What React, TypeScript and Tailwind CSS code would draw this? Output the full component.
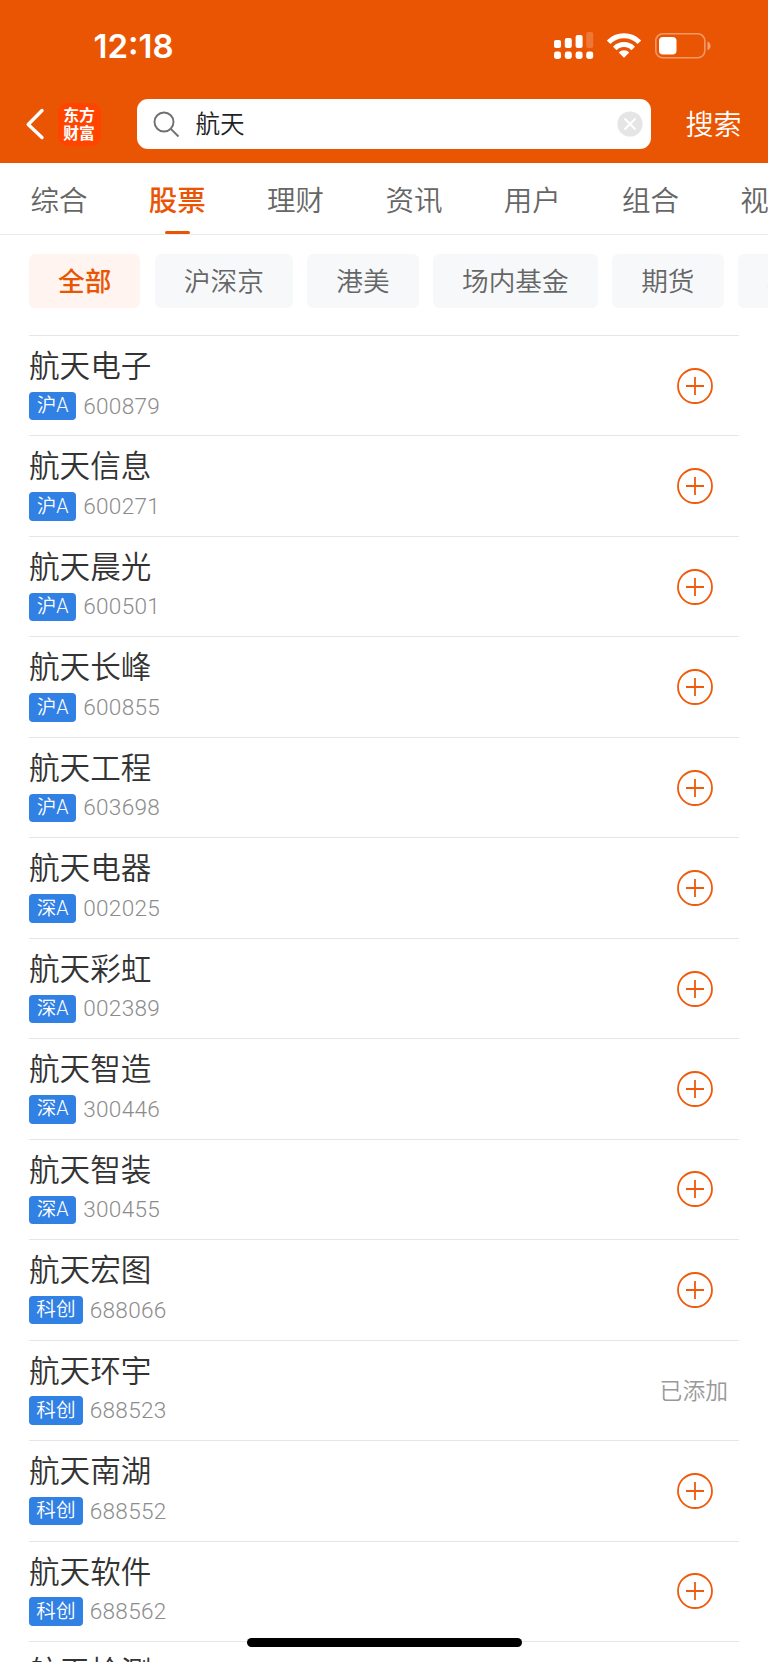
const TABS = ["综合", "股票", "理财", "资讯", "用户", "组合", "视频"];
const FILTERS = ["全部", "沪深京", "港美", "场内基金", "期货", "板块"];

type Stock = { name: string; market: string; code: string; added?: boolean };

const STOCKS: Stock[] = [
  { name: "航天电子", market: "沪A", code: "600879" },
  { name: "航天信息", market: "沪A", code: "600271" },
  { name: "航天晨光", market: "沪A", code: "600501" },
  { name: "航天长峰", market: "沪A", code: "600855" },
  { name: "航天工程", market: "沪A", code: "603698" },
  { name: "航天电器", market: "深A", code: "002025" },
  { name: "航天彩虹", market: "深A", code: "002389" },
  { name: "航天智造", market: "深A", code: "300446" },
  { name: "航天智装", market: "深A", code: "300455" },
  { name: "航天宏图", market: "科创", code: "688066" },
  { name: "航天环宇", market: "科创", code: "688523", added: true },
  { name: "航天南湖", market: "科创", code: "688552" },
  { name: "航天软件", market: "科创", code: "688562" },
  { name: "航天检测", market: "沪A", code: "600760" },
];

function StatusBar() {
  return (
    <div className="flex h-[92px] items-center justify-between pl-[93.5px] pr-[56.5px]">
      <span className="pt-px font-['Inter'] text-[33px] font-semibold leading-none">12:18</span>
      <div className="flex items-center">
        <svg className="h-7 w-10" viewBox="0 0 40 28" fill="#fff">
          <rect x="0" y="8" width="7" height="8" rx="2" />
          <rect x="10.8" y="6" width="7" height="10" rx="2" />
          <rect x="21.6" y="3" width="7" height="13" rx="2" />
          <rect x="32.2" y="0" width="7" height="16" rx="2" opacity="0.2" />
          <rect x="0" y="19.5" width="7" height="7.5" rx="2.4" />
          <rect x="10.8" y="19.5" width="7" height="7.5" rx="2.4" />
          <rect x="21.6" y="19.5" width="7" height="7.5" rx="2.4" />
          <rect x="32.2" y="19.5" width="7" height="7.5" rx="2.4" />
        </svg>
        <svg className="ml-3 h-7 w-[36px]" viewBox="0 0 36 28" fill="none" stroke="#fff" strokeWidth="5">
          <path d="M2.6 10.2a21.5 21.5 0 0 1 30.8 0" />
          <path d="M8.8 16.4a12.8 12.8 0 0 1 18.4 0" />
          <path d="M12.7 20.4a7.4 7.4 0 0 1 10.6 0L18 25.8z" fill="#fff" stroke="none" />
        </svg>
        <svg className="ml-3 h-7 w-[58px]" viewBox="0 0 58 28">
          <rect x="1.8" y="1.8" width="49" height="24" rx="7" fill="none" stroke="#fff" strokeOpacity="0.4" strokeWidth="1.6" />
          <rect x="5" y="5" width="17.5" height="17.5" rx="4" fill="#fff" />
          <path d="M53.5 9.5c4 1.4 4 7.4 0 8.8z" fill="#fff" fillOpacity="0.45" />
        </svg>
      </div>
    </div>
  );
}

function SearchBar() {
  return (
    <div className="flex h-[71px] items-start pt-[7px]">
      <div className="flex h-[50px] w-[136.5px] shrink-0 items-center pl-[25px]">
        <svg className="h-8 w-5" viewBox="0 0 20 32" fill="none" stroke="#fff" strokeWidth="3.4" strokeLinecap="round" strokeLinejoin="round">
          <path d="M17 2.5 3.2 16.5 17 29.5" />
        </svg>
        <div className="ml-[12.5px] flex h-[43px] w-[43px] flex-col items-center justify-center rounded-[10px] bg-[#ff4400] pb-px font-['Noto_Sans_CJK_SC',sans-serif] text-[15.8px] font-bold leading-[18px]">
          <span>东方</span>
          <span>财富</span>
        </div>
      </div>
      <div className="flex h-[50px] w-[514.5px] shrink-0 items-center rounded-[11px] bg-white pl-[16px] pr-[8.5px]">
        <svg className="h-[27px] w-[27px]" viewBox="0 0 27 27" fill="none" stroke="#707070" strokeWidth="1.9">
          <circle cx="11" cy="11" r="9.5" />
          <path d="m17.8 17.8 7.7 7.7" />
        </svg>
        <span className="ml-[16px] flex-1 text-[24.6px] leading-[51px] text-[#222]">航天</span>
        <svg className="h-[26px] w-[26px]" viewBox="0 0 26 26">
          <circle cx="13" cy="13" r="12.6" fill="#e5e5e5" />
          <path d="m7.5 7.5 11 11m0-11-11 11" stroke="#fff" strokeWidth="2" />
        </svg>
      </div>
      <span className="ml-[34.5px] whitespace-nowrap text-[28px] leading-[53px]">搜索</span>
    </div>
  );
}

function AddButton() {
  return (
    <svg className="mr-[26.5px] h-9 w-9" viewBox="0 0 36 36" fill="none" stroke="#ef5a0b" strokeWidth="1.8">
      <circle cx="18" cy="18" r="17" />
      <path d="M9 18h18M18 9v18" />
    </svg>
  );
}

function StockRow({ stock }: { stock: Stock }) {
  return (
    <li className="flex h-[100.47px] items-center justify-between border-t-[1.4px] border-[#e6e6e6]">
      <div className="flex h-full flex-col pt-[10px]">
        <div className="h-[45.5px] text-[30.6px] leading-[41px] text-[#333]">{stock.name}</div>
        <div className="flex items-center">
          <span className="flex h-[28.5px] min-w-[47.3px] items-center justify-center rounded-[4px] bg-[#3180e4] px-[7.3px] font-['Roboto','Noto_Sans_CJK_SC',sans-serif] text-[19.6px] leading-none text-white">
            {stock.market}
          </span>
          <span className="ml-[7px] pt-px font-['Roboto'] text-[22.6px] font-light leading-[28px] tracking-[0.25px] text-[#8c8c8c]">
            {stock.code}
          </span>
        </div>
      </div>
      {stock.added ? <span className="mr-[11px] pt-px text-[22.8px] text-[#999]">已添加</span> : <AddButton />}
    </li>
  );
}

export default function App() {
  return (
    <div className="relative h-[1662px] w-[768px] overflow-hidden bg-white font-['Liberation_Sans','Noto_Sans_CJK_SC',sans-serif] font-[350]">
      <header className="h-[163px] bg-[#ea5504] text-white">
        <StatusBar />
        <SearchBar />
      </header>

      <nav className="flex h-[72px] gap-[61.3px] overflow-hidden border-b border-[#ebebeb] pl-[30.5px]">
        {TABS.map((tab) =>
          tab === "股票" ? (
            <div key={tab} className="flex w-[57px] shrink-0 flex-col items-center text-[28.5px] font-medium text-[#ea5504]">
              <span className="h-[68px] leading-[76px]">{tab}</span>
              <span className="h-[4px] w-[25px] rounded-[2px] bg-[#ea5504]" />
            </div>
          ) : (
            <span key={tab} className="w-[57px] shrink-0 text-[28.5px] leading-[76px] text-[#666]">{tab}</span>
          ),
        )}
      </nav>

      <div className="flex h-[100px] gap-[14.4px] overflow-hidden pl-[29px] pt-[19px]">
        {FILTERS.map((filter, i) => (
          <span
            key={filter}
            className={
              i === 0
                ? "h-[53.5px] shrink-0 rounded-[6px] bg-[#fff4ef] px-[29px] text-[26.7px] font-medium leading-[56px] text-[#ea5504]"
                : "h-[53.5px] shrink-0 rounded-[6px] bg-[#f7f8fa] px-[29px] text-[26.7px] leading-[56px] text-[#666]"
            }
          >
            {filter}
          </span>
        ))}
      </div>

      <ul className="ml-[29px] mr-[29px]">
        {STOCKS.map((stock) => (
          <StockRow key={stock.name} stock={stock} />
        ))}
      </ul>

      {/* home indicator */}
      <div className="absolute bottom-[15px] left-[247px] h-[9px] w-[275px] rounded-full bg-black" />
    </div>
  );
}
